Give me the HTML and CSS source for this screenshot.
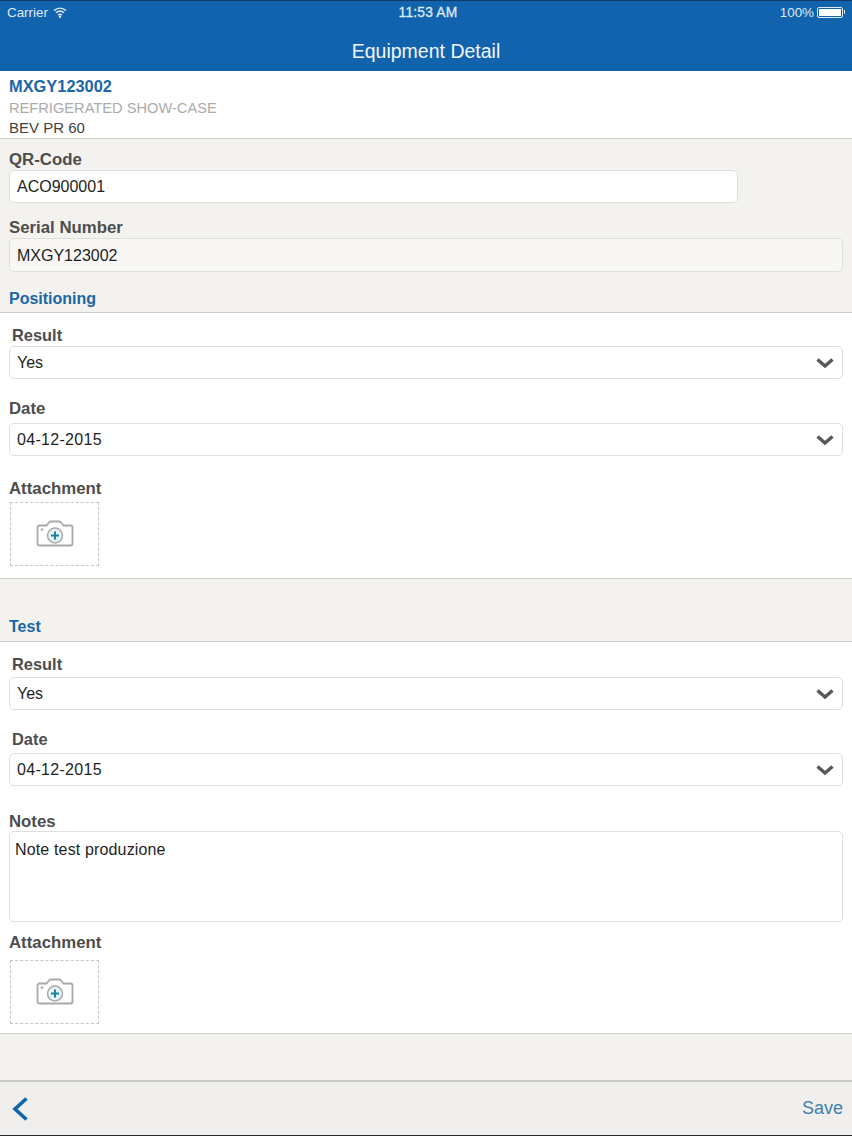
FILE: index.html
```html
<!DOCTYPE html>
<html lang="en">
<head>
<meta charset="utf-8">
<title>Equipment Detail</title>
<link rel="stylesheet" href="styles.css">
</head>
<body>
<div class="page">
  <header class="header">
    <div class="status">
      <div class="status-left">Carrier
        <svg class="wifi" width="14" height="11" viewBox="0 0 14 11"><path d="M1 3.6C4.6.4 9.400.4 13 3.600M3 5.800c2.400-2.100 5.600-2.100 8 0M5 8c1.200-1 2.800-1 4 0" fill="none" stroke="#dfeaf5" stroke-width="1.500"/><circle cx="7" cy="9.700" r="1.200" fill="#dfeaf5"/></svg>
      </div>
      <div class="status-time">11:53 AM</div>
      <div class="status-right">100%
        <span class="battery"><span class="battery-fill"></span></span><span class="battery-tip"></span>
      </div>
    </div>
    <h1 class="title">Equipment Detail</h1>
  </header>
  <main class="content">
    <section class="summary">
      <div class="code">MXGY123002</div>
      <div class="type">REFRIGERATED SHOW-CASE</div>
      <div class="model">BEV PR 60</div>
    </section>
    <section class="ids">
      <div class="label label-qr">QR-Code</div>
      <div class="input input-qr">ACO900001</div>
      <div class="label label-serial">Serial Number</div>
      <div class="input input-serial">MXGY123002</div>
      <div class="section-title st-pos">Positioning</div>
    </section>
    <section class="panel panel-pos">
      <div class="label label-in l-r1">Result</div>
      <div class="input select"><span>Yes</span><svg class="chev" width="20" height="12" viewBox="0 0 20 12"><path d="M2.500 2.500 10 9l7.500-6.500" fill="none" stroke="#58585a" stroke-width="3.400"/></svg></div>
      <div class="label l-d1">Date</div>
      <div class="input select"><span class="date">04-12-2015</span><svg class="chev" width="20" height="12" viewBox="0 0 20 12"><path d="M2.500 2.500 10 9l7.500-6.500" fill="none" stroke="#58585a" stroke-width="3.400"/></svg></div>
      <div class="label l-a1">Attachment</div>
      <div class="attach">
        <svg width="38" height="30" viewBox="0 0 38 30"><path d="M3.500 6.500h7l2.500-3c.5-.7 1-1 2-1h8c1 0 1.500.3 2 1l2.500 3h7c1.200 0 2 .8 2 2v16c0 1.200-.8 2-2 2h-31c-1.200 0-2-.8-2-2v-16c0-1.200.8-2 2-2z" fill="#fff" stroke="#a9a9a9" stroke-width="1.800"/><circle cx="6" cy="10.500" r="1.300" fill="#a9a9a9"/><circle cx="19" cy="16.500" r="7.500" fill="#e4f3f6" stroke="#a9a9a9" stroke-width="1.500"/><path d="M19 12.500v8M15 16.500h8" stroke="#1f7f9f" stroke-width="2"/></svg>
      </div>
    </section>
    <section class="band">
      <div class="section-title st-test">Test</div>
    </section>
    <section class="panel panel-test">
      <div class="label label-in l-r2">Result</div>
      <div class="input select"><span>Yes</span><svg class="chev" width="20" height="12" viewBox="0 0 20 12"><path d="M2.500 2.500 10 9l7.500-6.500" fill="none" stroke="#58585a" stroke-width="3.400"/></svg></div>
      <div class="label label-in l-d2">Date</div>
      <div class="input select"><span class="date">04-12-2015</span><svg class="chev" width="20" height="12" viewBox="0 0 20 12"><path d="M2.500 2.500 10 9l7.500-6.500" fill="none" stroke="#58585a" stroke-width="3.400"/></svg></div>
      <div class="label l-n">Notes</div>
      <div class="notes">Note test produzione</div>
      <div class="label l-a2">Attachment</div>
      <div class="attach">
        <svg width="38" height="30" viewBox="0 0 38 30"><path d="M3.500 6.500h7l2.500-3c.5-.7 1-1 2-1h8c1 0 1.500.3 2 1l2.500 3h7c1.200 0 2 .8 2 2v16c0 1.200-.8 2-2 2h-31c-1.200 0-2-.8-2-2v-16c0-1.200.8-2 2-2z" fill="#fff" stroke="#a9a9a9" stroke-width="1.800"/><circle cx="6" cy="10.500" r="1.300" fill="#a9a9a9"/><circle cx="19" cy="16.500" r="7.500" fill="#e4f3f6" stroke="#a9a9a9" stroke-width="1.500"/><path d="M19 12.500v8M15 16.500h8" stroke="#1f7f9f" stroke-width="2"/></svg>
      </div>
    </section>
  </main>
  <footer class="toolbar">
    <svg class="back" width="18" height="26" viewBox="0 0 18 26"><path d="M15.500 2.500 4 13l11.500 10.500" fill="none" stroke="#1163ae" stroke-width="3.600"/></svg>
    <span class="save">Save</span>
  </footer>
</div>
</body>
</html>
```
FILE: styles.css
```css
* { box-sizing: border-box; }
html, body { margin: 0; padding: 0; }
body { font-family: "Liberation Sans", Arial, sans-serif; background: #f3f2ef; color: #222; }
.page { width: 852px; height: 1136px; display: flex; flex-direction: column; overflow: hidden; border-bottom: 1px solid #2a2a2a; }
.header { height: 71px; flex: none; background: #1163ae; border-top: 1px solid #12386a; color: #fff; }
.status { height: 22px; padding: 0 7px; display: grid; grid-template-columns: 1fr auto 1fr; align-items: center; font-size: 13.400px; color: #dfeaf5; }
.status-left { display: flex; align-items: center; gap: 5px; }
.status-time { font-size: 13.800px; letter-spacing: .2px; -webkit-text-stroke: .3px #dfeaf5; padding-left: 4px; }
.status-right { display: flex; align-items: center; justify-content: flex-end; }
.battery { width: 26px; height: 11px; margin-left: 3px; border: 1px solid #dfeaf5; border-radius: 2px; padding: 1px; display: block; }
.battery-fill { display: block; height: 100%; background: #fff; }
.battery-tip { width: 1px; height: 4px; background: #dfeaf5; margin-left: 1px; }
.title { margin: 16px 0 0; text-align: center; font-size: 19.500px; font-weight: 400; line-height: 24px; color: #f2f6fb; }
.content { flex: 1; overflow: hidden; min-height: 0; }
.summary { height: 68px; background: #fff; border-bottom: 1px solid #cfcfcd; padding: 5px 9px 0; line-height: 20px; font-size: 15px; }
.code { color: #1a66a8; font-weight: 700; font-size: 16.400px; }
.type { color: #ababab; font-size: 14.650px; margin-top: 2px; }
.model { color: #3f3f3f; }
.label { font-size: 16.800px; font-weight: 700; line-height: 20px; color: #4d4d4d; }
.input { margin: 0 9px; height: 33px; background: #fff; border: 1px solid #dededc; border-radius: 5px; padding: 0 7px; font-size: 16px; line-height: 31px; color: #1e1e1e; }
.date { letter-spacing: .3px; }
.ids { height: 173px; padding-top: 11px; }
.ids .label { margin-left: 9px; }
.input-qr { width: 729px; }
.label-serial { margin-top: 15px; }
.input-serial { height: 34px; line-height: 33px; background: #f8f7f5; }
.section-title { color: #1a66a8; font-size: 16px; font-weight: 700; line-height: 20px; margin-left: 9px; }
.st-pos { margin-top: 17px; }
.panel { background: #fff; border-top: 1px solid #cfcfcd; border-bottom: 1px solid #cfcfcd; }
.panel .label { margin-left: 9px; }
.panel .label-in { margin-left: 12px; font-size: 16.400px; }
.panel-pos { height: 267px; padding-top: 12px; }
.panel-pos .l-r1 { margin-bottom: 1px; }
.select { display: flex; align-items: center; justify-content: space-between; padding-right: 7px; }
.l-d1 { margin-top: 20px; margin-bottom: 4px; }
.l-a1 { margin-top: 23px; margin-bottom: 3px; }
.attach { margin-left: 10px; width: 89px; height: 64px; border: 1px dashed #c6c6c6; display: flex; align-items: center; justify-content: center; }
.band { height: 62px; padding-top: 38px; }
.panel-test { height: 393px; padding-top: 12px; }
.panel-test .l-r2 { margin-bottom: 3px; }
.panel-test .l-d2 { margin-top: 19px; margin-bottom: 4px; }
.l-n { margin-top: 26px; height: 19px; }
.notes { margin: 0 9px; height: 91px; border: 1px solid #dededc; border-radius: 5px; padding: 9px 5px; font-size: 16px; letter-spacing: .15px; line-height: 18px; color: #1e1e1e; }
.l-a2 { margin-top: 11px; margin-bottom: 7px; }
.toolbar { height: 55px; flex: none; background: #f0efed; border-top: 2px solid #c9c9c7; display: flex; align-items: center; justify-content: space-between; padding: 0 9px 0 11px; }
.save { color: #3b7fb6; font-size: 18px; }
```
